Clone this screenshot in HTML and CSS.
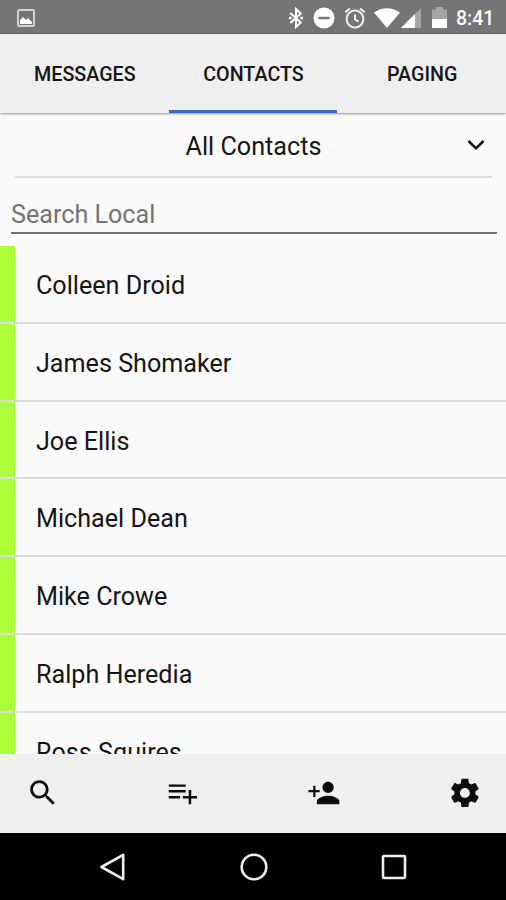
FILE: index.html
```html
<!DOCTYPE html>
<html lang="en">
<head>
<meta charset="utf-8">
<title>Contacts</title>
<link rel="stylesheet" href="styles.css">
</head>
<body>
<div class="phone">
  <header class="status">
    <svg class="picture" width="18" height="18" viewBox="0 0 18 18"><rect x="1" y="1" width="16" height="16" rx="1" fill="none" stroke="#d2d2d2" stroke-width="2"/><path d="M3 15v-4l3-3 3 3 2-2 4 4v2z" fill="#fff"/></svg>
    <div class="indicators">
      <svg width="14" height="22" viewBox="0 0 14 22"><path d="M1.300 6l10.500 9.500L7 20V2l4.800 4.500L1.300 16" fill="none" stroke="#fff" stroke-width="2"/><path d="M0 9.700h2.600v2.600H0zM11.400 9.700H14v2.600h-2.600z" fill="#fff"/></svg>
      <svg class="dnd" width="22" height="22" viewBox="0 0 22 22"><circle cx="11" cy="11" r="10.500" fill="#fff"/><path d="M5.500 11h11" stroke="#757575" stroke-width="2.400"/></svg>
      <svg class="alarm" width="22" height="22" viewBox="0 0 22 22"><circle cx="11" cy="12" r="8.400" fill="none" stroke="#f2f2f2" stroke-width="2"/><path d="M1.200 5.200L6 1.500M16 1.500l4.800 3.700M11 7.500v5l3.500 2.200" fill="none" stroke="#f2f2f2" stroke-width="2"/></svg>
      <svg class="wifi" width="26" height="20" viewBox="0 0 26 20"><path d="M0 4.500Q13-4 26 4.500L13 20z" fill="#fff"/></svg>
      <svg class="signal" width="21" height="20" viewBox="0 0 21 20"><path d="M0 20L20 0v20z" fill="#a6a6a6"/><path d="M0 20L14 6v14z" fill="#fff"/></svg>
      <svg class="battery" width="15" height="21" viewBox="0 0 15 21"><path d="M0 2.500h4V0h7v2.500h4V12H0z" fill="#a6a6a6"/><path d="M0 12h15v9H0z" fill="#fff"/></svg>
      <span class="clock">8:41</span>
    </div>
  </header>
  <nav class="tabs">
    <div class="tab">MESSAGES</div>
    <div class="tab active">CONTACTS</div>
    <div class="tab">PAGING</div>
  </nav>
  <main class="content">
    <div class="filter">
      <span class="filter-label">All Contacts</span>
      <svg class="chevron" width="18" height="12" viewBox="0 0 18 12"><path d="M1.500 2L9 9.300 16.500 2" fill="none" stroke="#111" stroke-width="2.500"/></svg>
    </div>
    <div class="search">Search Local</div>
    <ul class="contacts">
      <li>Colleen Droid</li>
      <li>James Shomaker</li>
      <li>Joe Ellis</li>
      <li>Michael Dean</li>
      <li>Mike Crowe</li>
      <li>Ralph Heredia</li>
      <li>Ross Squires</li>
    </ul>
  </main>
  <nav class="toolbar">
    <svg viewBox="0 0 24 24"><path d="M15.500 14h-.79l-.28-.27C15.410 12.590 16 11.110 16 9.500 16 5.910 13.090 3 9.500 3S3 5.910 3 9.500 5.910 16 9.500 16c1.610 0 3.090-.59 4.230-1.570l.27.28v.79l5 4.990L20.490 19l-4.990-5zm-6 0C7.010 14 5 11.990 5 9.500S7.010 5 9.500 5 14 7.010 14 9.500 11.990 14 9.500 14z"/></svg>
    <svg viewBox="0 0 24 24"><path d="M14 10H2v1.700h12V10zm0-4H2v1.700h12V6zm3.900 8.200V10h-1.800v4.200H12v1.700h4.100V20h1.800v-4.100H22v-1.700h-4.100zM2 15.900h8v-1.700H2v1.700z"/></svg>
    <svg viewBox="0 0 24 24"><path d="M15 12c2.210 0 4-1.790 4-4s-1.790-4-4-4-4 1.790-4 4 1.790 4 4 4zm-9-2V7H4.400v3H1v1.600h3.400V15H6v-3.400h3V10H6zm9 4c-2.670 0-8 1.340-8 4v2h16v-2c0-2.660-5.330-4-8-4z"/></svg>
    <svg viewBox="0 0 24 24"><path d="M19.430 12.980c.04-.32.07-.64.07-.98s-.03-.66-.07-.98l2.110-1.650c.19-.15.24-.42.12-.64l-2-3.460c-.12-.22-.39-.3-.61-.22l-2.490 1c-.52-.4-1.080-.73-1.690-.98l-.38-2.650C14.460 2.180 14.250 2 14 2h-4c-.25 0-.46.180-.49.420l-.38 2.650c-.61.250-1.170.590-1.690.980l-2.490-1c-.23-.09-.49 0-.61.220l-2 3.460c-.13.220-.07.490.12.640l2.110 1.650c-.04.320-.07.650-.07.980s.03.660.07.980l-2.110 1.650c-.19.150-.24.420-.12.640l2 3.460c.12.220.39.300.61.220l2.490-1c.52.400 1.080.730 1.690.980l.38 2.650c.03.240.24.420.49.420h4c.25 0 .46-.18.49-.42l.38-2.650c.61-.25 1.170-.59 1.690-.98l2.490 1c.23.090.49 0 .61-.22l2-3.460c.12-.22.07-.49-.12-.64l-2.110-1.650zM12 15.500c-1.930 0-3.500-1.570-3.500-3.500s1.570-3.500 3.500-3.500 3.500 1.570 3.500 3.500-1.570 3.500-3.500 3.500z"/></svg>
  </nav>
  <footer class="system">
    <svg viewBox="0 0 30 30"><path d="M3.500 15L25.200 2.800v24.400z"/></svg>
    <svg viewBox="0 0 30 30"><circle cx="15" cy="15" r="12.300"/></svg>
    <svg viewBox="0 0 30 30"><rect x="4" y="4" width="22" height="22" rx="1"/></svg>
  </footer>
</div>
</body>
</html>
```

FILE: styles.css
```css
* { box-sizing: border-box; }

body {
  margin: 0;
  font-family: Roboto, "Liberation Sans", sans-serif;
  color: #151515;
}

svg { display: block; flex: none; }

.phone {
  display: flex;
  flex-direction: column;
  width: 506px;
  height: 900px;
  overflow: hidden;
  background: #fafafa;
}

.status {
  flex: none;
  height: 34px;
  display: flex;
  justify-content: space-between;
  padding: 0 10px 0 17px;
  background: #757575;
  border-bottom: 1px solid #666;
}

.picture { margin-top: 9px; }

.indicators {
  display: flex;
  align-items: center;
  padding-top: 2px;
}

.dnd { margin-left: 10px; }
.alarm { margin-left: 9px; }
.wifi { margin-left: 8px; }
.signal { margin-left: 1px; }
.battery { margin-left: 10px; }

.clock {
  margin-left: 9px;
  width: 40px;
  padding-top: 2px;
  font-size: 19.5px;
  font-weight: 500;
  line-height: 30px;
  color: #fff;
  white-space: nowrap;
}

.tabs {
  flex: none;
  height: 79px;
  display: grid;
  grid-template-columns: repeat(3, 1fr);
  background: #efefef;
  box-shadow: 0 1px 2px rgba(0, 0, 0, 0.4);
  z-index: 1;
}

.tab {
  height: 79px;
  padding: 2px 0 0 1px;
  text-align: center;
  font-size: 19.7px;
  font-weight: 500;
  line-height: 77px;
}

.active {
  background: linear-gradient(#3367d6, #3367d6) bottom / 100% 3px no-repeat;
}

.content {
  flex: none;
  height: 641px;
  overflow: hidden;
}

.filter {
  height: 65px;
  margin: 0 14px 0 15px;
  display: grid;
  grid-template-columns: 1fr auto 1fr;
  align-items: center;
  border-bottom: 2px solid #dedede;
}

.filter-label {
  grid-column: 2;
  padding-top: 2px;
  font-size: 25.2px;
  line-height: 64px;
}

.chevron { justify-self: end; margin: 0 7px 2px 0; }

.search {
  height: 56px;
  margin: 0 9px 12px 11px;
  padding-top: 21px;
  border-bottom: 2px solid #707070;
  font-size: 25.15px;
  line-height: 32px;
  color: #747474;
}

.contacts {
  list-style: none;
  margin: 0;
  padding: 0;
}

.contacts li {
  height: 77.8px;
  padding: 2px 0 0 36px;
  font-size: 25.15px;
  line-height: 76px;
  background: linear-gradient(#dcdcdc, #dcdcdc) bottom / 100% 2px no-repeat,
    linear-gradient(#adff3b, #adff3b) left / 15px 100% no-repeat;
}

.toolbar {
  flex: none;
  height: 79px;
  display: flex;
  justify-content: space-between;
  align-items: center;
  padding: 0 24.500px 1px 25.500px;
  background: #efefef;
}

.toolbar svg { width: 33.8px; height: 33.8px; fill: #0c0c0c; }

.system {
  flex: 1;
  display: flex;
  justify-content: center;
  align-items: center;
  gap: 110.5px;
  padding-left: 1px;
  background: #000;
}

.system svg {
  width: 30px;
  height: 30px;
  fill: none;
  stroke: #eee;
  stroke-width: 2.6;
  stroke-linejoin: round;
}
```
